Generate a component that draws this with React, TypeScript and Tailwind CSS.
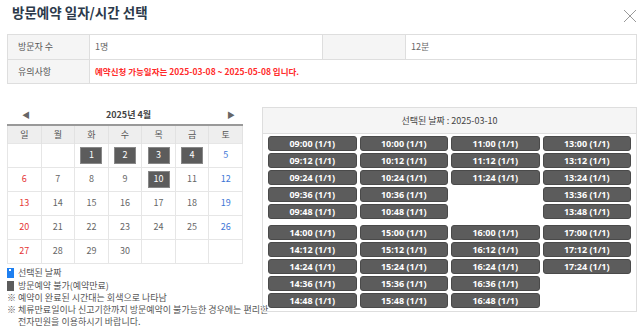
import React from "react";

const font = { fontFamily: '"Noto Sans CJK KR", "Noto Sans", sans-serif' };

const weeks: (number | null)[][] = [
  [null, null, 1, 2, 3, 4, 5],
  [6, 7, 8, 9, 10, 11, 12],
  [13, 14, 15, 16, 17, 18, 19],
  [20, 21, 22, 23, 24, 25, 26],
  [27, 28, 29, 30, null, null, null],
];
const blocked = [1, 2, 3, 4, 10];
const days = ["일", "월", "화", "수", "목", "금", "토"];

const groupA = [
  ["09:00", "10:00", "11:00", "13:00"],
  ["09:12", "10:12", "11:12", "13:12"],
  ["09:24", "10:24", "11:24", "13:24"],
  ["09:36", "10:36", "", "13:36"],
  ["09:48", "10:48", "", "13:48"],
];
const groupB = [
  ["14:00", "15:00", "16:00", "17:00"],
  ["14:12", "15:12", "16:12", "17:12"],
  ["14:24", "15:24", "16:24", "17:24"],
  ["14:36", "15:36", "16:36", ""],
  ["14:48", "15:48", "16:48", ""],
];

const SlotGrid = ({ rows }: { rows: string[][] }) => (
  <div className="grid grid-cols-4 gap-x-[3px] gap-y-[2px]">
    {rows.flat().map((t, i) =>
      t ? (
        <div
          key={i}
          className="h-[15px] rounded-[3px] bg-[#5c5c5c] border border-[#4a4a4a] text-white text-[9px] font-bold leading-[13px] text-center"
          style={{ fontFamily: '"Open Sans", "DejaVu Sans", sans-serif' }}
        >
          {t} (1/1)
        </div>
      ) : (
        <div key={i} className="h-[15px]" />
      )
    )}
  </div>
);

export default function App() {
  return (
    <div className="w-[640px] h-[328px] bg-white overflow-hidden text-[#555]" style={font}>
      {/* title */}
      <div className="flex justify-between items-start h-[26px] pl-[12px] pr-[3px]">
        <h1 className="text-[13.5px] font-bold text-[#2c3a4b] leading-[20px] pt-[2px]">방문예약 일자/시간 선택</h1>
        <svg width="14" height="14" viewBox="0 0 14 14" className="mt-[9px]">
          <path d="M1 1L13 13M13 1L1 13" stroke="#999" strokeWidth="1" fill="none" />
        </svg>
      </div>

      {/* info table */}
      <table className="mx-[7px] mt-[8px] w-[630px] border-collapse text-[9px]">
        <tbody>
          <tr className="h-[25px]">
            <td className="w-[82px] border border-[#dedede] bg-[#f5f5f5] pl-[10px]">방문자 수</td>
            <td className="w-[233px] border border-[#dedede] pl-[5px] text-[#666]">1명</td>
            <td className="w-[83px] border border-[#dedede] bg-[#f5f5f5]"></td>
            <td className="border border-[#dedede] pl-[5px] text-[#666]">12분</td>
          </tr>
          <tr className="h-[24px]">
            <td className="border border-[#dedede] bg-[#f5f5f5] pl-[10px]">유의사항</td>
            <td colSpan={3} className="border border-[#dedede] pl-[5px] font-bold text-[8.5px] text-[#ff2a2a]">
              예약신청 가능일자는 2025-03-08 ~ 2025-05-08 입니다.
            </td>
          </tr>
        </tbody>
      </table>

      <div className="flex mt-[22px]">
        {/* calendar */}
        <div className="ml-[7px] w-[236px]">
          <div className="flex justify-between items-center h-[18px] pl-[15px] pr-[8px] text-[9px] text-[#444]">
            <span className="text-[8px] text-[#666]">◀</span>
            <span className="font-bold">2025년 4월</span>
            <span className="text-[8px] text-[#666]">▶</span>
          </div>
          <table className="w-[236px] border-collapse table-fixed text-[9px]">
            <thead>
              <tr className="h-[18px] bg-[#eeeeee] border-t-2 border-[#999]">
                {days.map((d) => (
                  <th key={d} className="font-normal text-[#555] border-x border-[#e2e2e2]">{d}</th>
                ))}
              </tr>
            </thead>
            <tbody>
              {weeks.map((w, i) => (
                <tr key={i} className="h-[24px]">
                  {w.map((d, j) => (
                    <td key={j} className="border border-[#e6e6e6] text-center p-0">
                      {d && blocked.includes(d) ? (
                        <span className="mx-auto flex items-center justify-center w-[22px] h-[17px] bg-[#5c5c5c] border border-[#888] text-white">
                          {d}
                        </span>
                      ) : (
                        <span className={j === 0 ? "text-[#e53535]" : j === 6 ? "text-[#3d76d6]" : "text-[#666]"}>{d}</span>
                      )}
                    </td>
                  ))}
                </tr>
              ))}
            </tbody>
          </table>
          <div className="mt-[3px] text-[9px] leading-[12px] text-[#555] whitespace-nowrap">
            <div className="flex items-center gap-[4px] h-[12px]">
              <span className="relative w-[7px] h-[10px] bg-[#1e7ff0]">
                <span className="absolute left-[2px] top-[1px] w-[2px] h-[2px] bg-white" />
              </span>
              선택된 날짜
            </div>
            <div className="flex items-center gap-[4px] h-[12px] mt-[1px]">
              <span className="w-[7px] h-[10px] bg-[#5c5c5c]" />
              방문예약 불가(예약만료)
            </div>
            <div className="h-[12px]">※ 예약이 완료된 시간대는 회색으로 나타남</div>
            <div className="h-[12px]">※ 체류만료일이나 신고기한까지 방문예약이 불가능한 경우에는 편리한</div>
            <div className="h-[12px] pl-[11px]">전자민원을 이용하시기 바랍니다.</div>
          </div>
        </div>

        {/* time slots */}
        <div className="ml-[19px] mt-[1px] w-[375px] border border-[#dedede] self-start">
          <div className="h-[26px] bg-[#f5f5f5] border-b border-[#dedede] flex items-center justify-center text-[9px] text-[#444]">
            선택된 날짜 : 2025-03-10
          </div>
          <div className="px-[5px] pt-[2px] pb-[3px]">
            <SlotGrid rows={groupA} />
            <div className="h-[6px]" />
            <SlotGrid rows={groupB} />
          </div>
        </div>
      </div>
    </div>
  );
}
